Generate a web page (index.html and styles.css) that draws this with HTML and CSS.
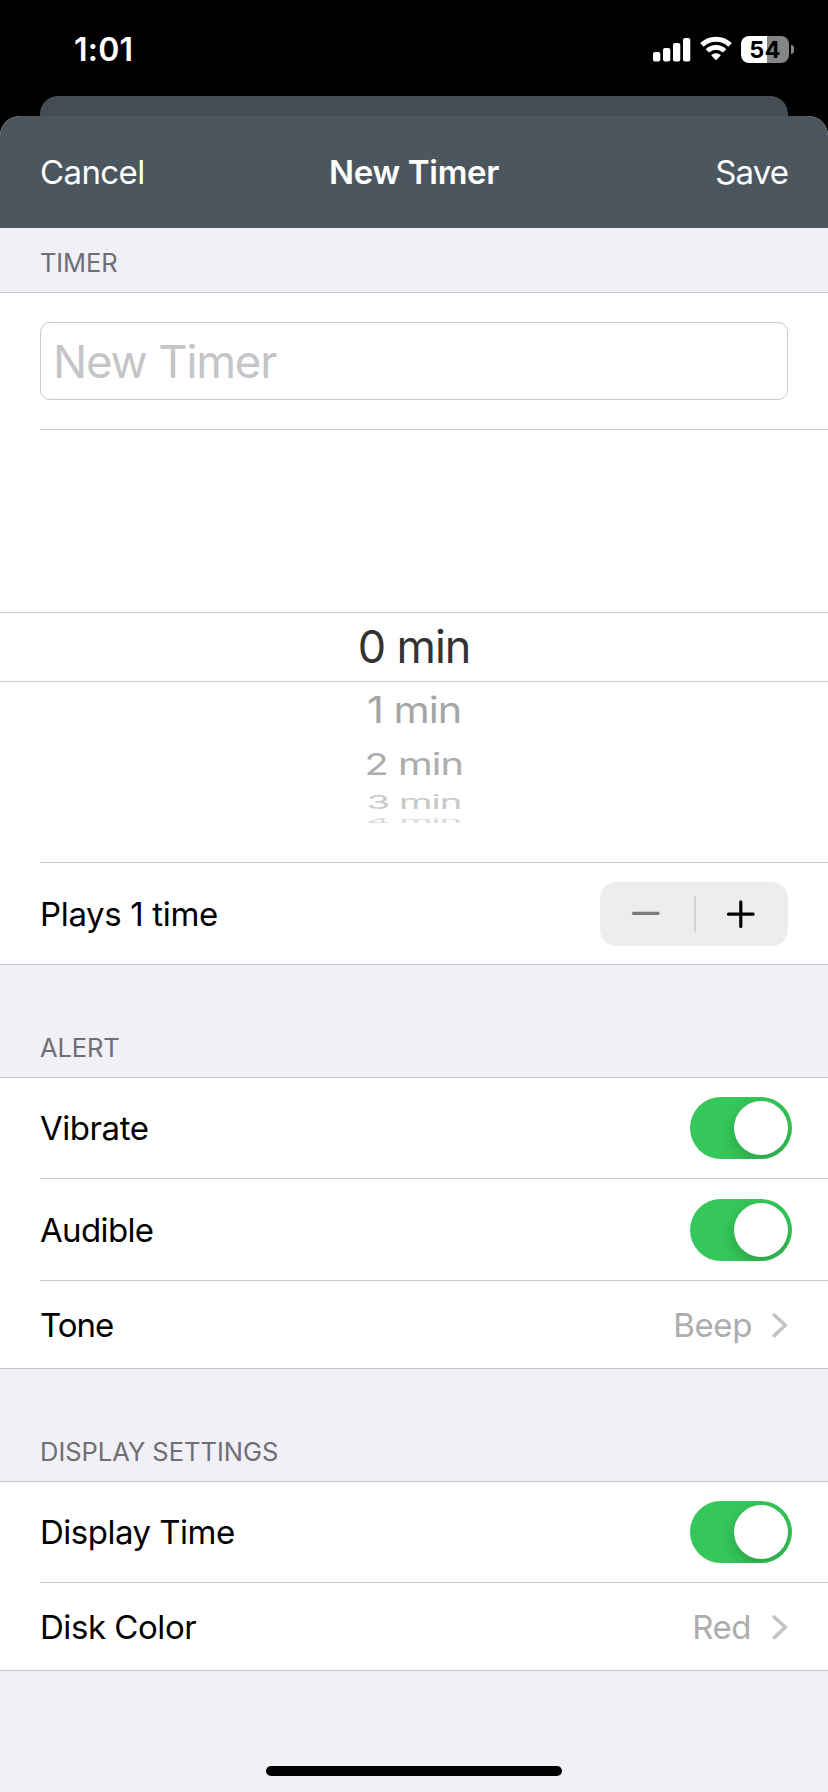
FILE: index.html
```
<!DOCTYPE html>
<html lang="en">
<head>
<meta charset="utf-8">
<title>New Timer</title>
<link rel="stylesheet" href="styles.css">
</head>
<body>
<div class="screen">
  <header class="status">
    <span class="clock">1:01</span>
    <div class="indicators">
      <svg class="signal" width="38" height="24" viewBox="0 0 38 24" fill="#fff">
        <rect x="0" y="14" width="7.3" height="9.5" rx="2"/>
        <rect x="10" y="10" width="7.3" height="13.5" rx="2"/>
        <rect x="20" y="5" width="7.3" height="18.5" rx="2"/>
        <rect x="30" y="0" width="7.3" height="23.5" rx="2"/>
      </svg>
      <svg class="wifi" width="32" height="25" viewBox="0 0 32 25" fill="none" stroke="#fff">
        <path d="M1.9 8.9a20.2 20.2 0 0 1 28.2 0" stroke-width="5"/>
        <path d="M7.4 14.9a12.3 12.3 0 0 1 17.2 0" stroke-width="4.8"/>
        <path d="M16 24.3l-4.9-5a7 7 0 0 1 9.8 0z" fill="#fff" stroke="none"/>
      </svg>
      <div class="battery">
        <div class="battery-body">54</div>
        <div class="battery-tip"></div>
      </div>
    </div>
  </header>
  <div class="sheet-behind"></div>
  <main class="sheet">
    <nav class="nav">
      <span class="nav-cancel">Cancel</span>
      <h1 class="nav-title">New Timer</h1>
      <span class="nav-save">Save</span>
    </nav>

    <h2 class="section-title first timer-title">TIMER</h2>
    <section class="group">
      <div class="field-row"><div class="field">New Timer</div></div>
      <div class="rule"></div>
      <div class="picker">
        <div class="picker-selected"><span class="wheel w0">0 min</span></div>
        <div class="picker-rest">
          <div class="wheel-row r1"><span class="wheel w1">1 min</span></div>
          <div class="wheel-row r2"><span class="wheel w2">2 min</span></div>
          <div class="wheel-row r3"><span class="wheel w3">3 min</span></div>
          <div class="wheel-row r4"><span class="wheel w4">4 min</span></div>
        </div>
      </div>
      <div class="rule"></div>
      <div class="row plays">
        <span class="t-plays">Plays 1 time</span>
        <div class="stepper">
          <svg width="94" height="64" viewBox="0 0 94 64"><path d="M33.5 31.3h24.5" stroke="#7b7b7d" stroke-width="3.2" stroke-linecap="round"/></svg>
          <div class="stepper-divider"></div>
          <svg width="92" height="64" viewBox="0 0 92 64"><path d="M32.5 32.2h24.6M44.8 19.9v24.6" stroke="#000" stroke-width="3.2" stroke-linecap="round"/></svg>
        </div>
      </div>
    </section>

    <h2 class="section-title alert-title">ALERT</h2>
    <section class="group">
      <div class="row tall"><span class="t-vibrate">Vibrate</span><div class="toggle"><div class="thumb"></div></div></div>
      <div class="rule"></div>
      <div class="row"><span class="t-audible">Audible</span><div class="toggle"><div class="thumb"></div></div></div>
      <div class="rule"></div>
      <div class="row short">
        <span class="t-tone">Tone</span>
        <div class="value"><span class="t-beep">Beep</span><svg width="16" height="26" viewBox="0 0 16 26" fill="none" stroke="#c4c4c7" stroke-width="3.6" stroke-linecap="round" stroke-linejoin="round"><path d="M2.2 3l11.2 10.3L2.2 23.6"/></svg></div>
      </div>
    </section>

    <h2 class="section-title display-title">DISPLAY SETTINGS</h2>
    <section class="group">
      <div class="row tall"><span class="t-display">Display Time</span><div class="toggle"><div class="thumb"></div></div></div>
      <div class="rule"></div>
      <div class="row short">
        <span class="t-disk">Disk Color</span>
        <div class="value"><span class="t-red">Red</span><svg width="16" height="26" viewBox="0 0 16 26" fill="none" stroke="#c4c4c7" stroke-width="3.6" stroke-linecap="round" stroke-linejoin="round"><path d="M2.2 3l11.2 10.3L2.2 23.6"/></svg></div>
      </div>
    </section>
    <footer class="home"><div class="home-bar"></div></footer>
  </main>
</div>
</body>
</html>
```
FILE: styles.css
```
* { box-sizing: border-box; }
body {
  margin: 0;
  background: #000;
  font-family: Inter, "Liberation Sans", sans-serif;
  font-size: 33px;
  color: #000;
}
h1, h2 { margin: 0; font-size: inherit; font-weight: 400; }
svg { display: block; flex: none; }
span { white-space: nowrap; }
.screen { width: 828px; height: 1792px; display: flex; flex-direction: column; overflow: hidden; background: #000; }

/* Status bar */
.status { height: 96px; padding: 36px 34px 0 74px; display: flex; justify-content: space-between; align-items: flex-start; color: #fff; }
.clock { font-size: 32px; font-weight: 600; line-height: 28px; letter-spacing: .2px; }
.indicators { display: flex; align-items: flex-start; }
.signal { margin-top: 2px; }
.wifi { margin: 0 9px 0 9px; }
.battery { display: flex; align-items: center; gap: 2px; }
.battery-body {
  width: 48px; height: 27px; border-radius: 8px;
  background: linear-gradient(90deg, #fff 26px, #858585 26px);
  color: #000; font-size: 23.5px; font-weight: 700; line-height: 28px; text-align: center; letter-spacing: .2px;
}
.battery-tip { width: 3px; height: 9px; border-radius: 0 4px 4px 0; background: #858585; }

/* Sheets */
.sheet-behind { height: 20px; margin: 0 40px; flex: none; border-radius: 18px 18px 0 0; background: #454c53; }
.sheet { flex: 1; display: flex; flex-direction: column; border-radius: 20px 20px 0 0; overflow: hidden; background: #f1f0f6; }
.nav { height: 112px; flex: none; padding: 0 40px; display: grid; grid-template-columns: 1fr auto 1fr; align-items: center; background: #4c565e; color: #fff; }
.nav-cancel { letter-spacing: -.6px; }
.nav-title { font-weight: 600; letter-spacing: -.3px; }
.nav-save { justify-self: end; letter-spacing: -.9px; }

/* Lists */
.section-title { height: 112px; flex: none; padding: 68px 40px 0; font-size: 25.5px; line-height: 30px; color: #6f6e74; }
.section-title.first { height: 64px; padding-top: 20px; }
.timer-title { letter-spacing: -.1px; }
.alert-title { letter-spacing: -.15px; }
.display-title { letter-spacing: -.02px; }
.group { flex: none; background: #fff; border: solid #c7c6ca; border-width: 1px 0; }
.rule { height: 1px; margin-left: 40px; background: #c7c6ca; }
.row { height: 101px; padding: 0 36px 0 40px; display: flex; align-items: center; justify-content: space-between; }
.row.tall { height: 100px; }
.row.short { height: 87px; padding-right: 40px; }
.row.plays { padding-right: 40px; }
.field-row { height: 136px; padding: 29px 40px; }
.field { height: 78px; padding-left: 12px; border: 1px solid #c9c9cb; border-radius: 10px; font-size: 45.5px; line-height: 77px; letter-spacing: -1.2px; color: #c5c5c7; }

/* Picker */
.picker { height: 432px; padding-top: 182px; }
.picker-selected { height: 70px; border: solid #cbcbcd; border-width: 1px 0; text-align: center; line-height: 68px; }
.picker-rest { height: 141px; overflow: hidden; text-align: center; }
.wheel { display: inline-block; font-size: 45px; letter-spacing: -1.1px; }
.w0 { color: #333; }
.r1 { height: 55px; line-height: 55px; }
.r2 { height: 52px; line-height: 53px; }
.r3 { height: 25px; line-height: 26px; }
.r4 { height: 15px; line-height: 15px; }
.w1 { transform: scale(.92, .82); color: #a5a5a5; }
.w2 { transform: scale(.883, .67); color: #adadad; }
.w3 { transform: scale(.85, .41); color: #c9c9c9; }
.w4 { transform: scale(.84, .17); color: #dadada; }

/* Controls */
.stepper { width: 188px; height: 64px; display: flex; align-items: center; border-radius: 16px; background: #ededef; }
.stepper-divider { width: 2px; height: 36px; border-radius: 1px; background: #d3d3d5; }
.toggle { width: 102px; height: 62px; padding: 4px; display: flex; justify-content: flex-end; border-radius: 31px; background: #35c759; overflow: hidden; }
.thumb { width: 54px; height: 54px; border-radius: 50%; background: #fff; box-shadow: 0 6px 16px rgba(0, 0, 0, .2); }
.value { display: flex; align-items: center; gap: 20px; color: #adadad; }

.t-plays { letter-spacing: -.34px; }
.t-vibrate { letter-spacing: -.45px; }
.t-audible { letter-spacing: -.65px; }
.t-tone { letter-spacing: -1px; }
.t-beep { letter-spacing: -.4px; }
.t-display { letter-spacing: -.5px; }
.t-disk { letter-spacing: -.45px; }
.t-red { letter-spacing: -.5px; margin-right: 1px; }

.home { flex: 1; display: flex; justify-content: center; align-items: flex-end; padding-bottom: 16px; }
.home-bar { width: 296px; height: 10px; border-radius: 5px; background: #000; }
```
